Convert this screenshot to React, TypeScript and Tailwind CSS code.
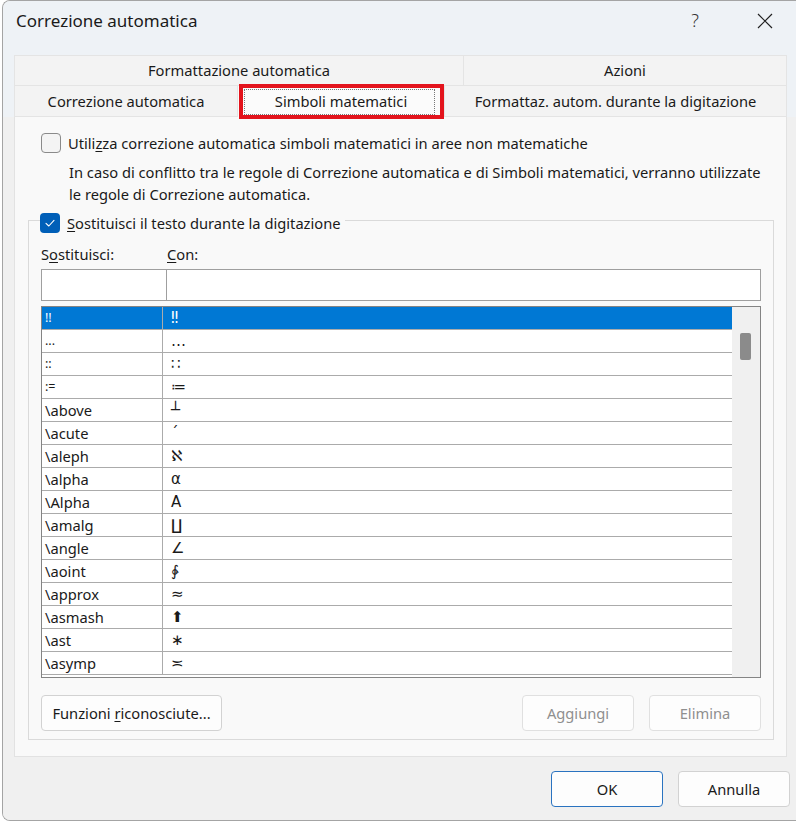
import React from 'react';

type Entry = { key: string; symbol: string; small?: boolean };

const entries: Entry[] = [
  { key: '!!', symbol: '‼', small: true },
  { key: '...', symbol: '…', small: true },
  { key: '::', symbol: '∷', small: true },
  { key: ':=', symbol: '≔', small: true },
  { key: '\\above', symbol: '┴' },
  { key: '\\acute', symbol: '´' },
  { key: '\\aleph', symbol: 'ℵ' },
  { key: '\\alpha', symbol: 'α' },
  { key: '\\Alpha', symbol: 'Α' },
  { key: '\\amalg', symbol: '∐' },
  { key: '\\angle', symbol: '∠' },
  { key: '\\aoint', symbol: '∳' },
  { key: '\\approx', symbol: '≈' },
  { key: '\\asmash', symbol: '⬆' },
  { key: '\\ast', symbol: '∗' },
  { key: '\\asymp', symbol: '≍' },
];

const Checkbox = ({ checked }: { checked?: boolean }) =>
  checked ? (
    <span className="flex h-[20px] w-[20px] shrink-0 items-center justify-center rounded-[4px] bg-[#005fb8]">
      <svg width="12" height="12" viewBox="0 0 12 12" fill="none">
        <path d="M2 6.3 L4.8 9 L10 3.4" stroke="#fff" strokeWidth="1.1" strokeLinecap="round" strokeLinejoin="round" />
      </svg>
    </span>
  ) : (
    <span className="h-[20px] w-[20px] shrink-0 rounded-[4px] border border-[#8a8a8a] bg-[#f4f4f4]" />
  );

const Button = ({
  children,
  width,
  disabled,
  primary,
}: {
  children: React.ReactNode;
  width: string;
  disabled?: boolean;
  primary?: boolean;
}) => (
  <button
    className={`flex h-[36px] items-center justify-center rounded-[4px] border bg-[#fdfdfd] text-[14.7px] ${width} ${
      disabled ? 'border-[#e0e0e0] text-[#8f8f8f]' : primary ? 'border-[#2a73c0]' : 'border-[#d2d2d2]'
    }`}
  >
    <span>{children}</span>
  </button>
);

const App = () => {
  return (
    <div className="h-[822px] w-[796px] overflow-hidden bg-white font-['Noto_Sans',sans-serif] text-[14.7px] text-[#1a1a1a]">
      <div className="ml-[2px] flex h-[821px] w-[794px] flex-col overflow-hidden rounded-tl-[8px] rounded-bl-[8px] border-t border-b border-l border-[#a4a4a4] bg-[#f0f0f0]">
        {/* Title bar */}
        <div className="flex h-[39px] shrink-0 items-center justify-between bg-[#eef2f6] pl-[13px] pr-[23px]">
          <span className="text-[17px]">Correzione automatica</span>
          <div className="flex items-center gap-[58px]">
            <span className="text-[18px] font-light text-[#333]">?</span>
            <svg width="16" height="16" viewBox="0 0 16 16">
              <path d="M1 1 L15 15 M15 1 L1 15" stroke="#222" strokeWidth="1.2" />
            </svg>
          </div>
        </div>

        {/* Client area */}
        <div className="flex flex-1 flex-col bg-[#f0f0f0]">
          <div className="bg-[#eef2f6] pt-[15px] pl-[11px] pr-[9px]">
            {/* Tab rows */}
            <div className="flex h-[31px]">
              <div className="flex w-[450px] items-center justify-center border border-[#e4e4e4] bg-[#f3f3f3]">
                Formattazione automatica
              </div>
              <div className="flex flex-1 items-center justify-center border border-l-0 border-[#e4e4e4] bg-[#f3f3f3]">
                Azioni
              </div>
            </div>
            <div className="flex h-[31px]">
              <div className="flex w-[224px] items-center justify-center border border-t-0 border-[#e4e4e4] bg-[#f3f3f3]">
                Correzione automatica
              </div>
              <div className="relative flex w-[206px] items-center justify-center bg-[#fbfbfb]">
                <span className="absolute top-[3px] right-[9px] bottom-[2px] left-[6px] border border-dotted border-[#777]" />
                <span className="relative">Simboli matematici</span>
                <span className="absolute top-[-2px] left-[1px] h-[35px] w-[205px] border-4 border-[#e3131c]" />
              </div>
              <div className="flex flex-1 items-center justify-center border border-t-0 border-[#e4e4e4] bg-[#f3f3f3]">
                Formattaz. autom. durante la digitazione
              </div>
            </div>
          </div>

          {/* Tab page */}
          <div className="bg-[#f0f0f0] pl-[11px] pr-[9px]">
            <div className="h-[640px] border border-t-0 border-[#e2e2e2] bg-[#f9f9f9] pt-[16px]">
              <div className="pl-[26px]">
                <div className="flex h-[20px] items-center gap-[7px]">
                  <Checkbox />
                  <span className="whitespace-nowrap">
                    Utili<span className="underline underline-offset-2">z</span>za correzione automatica simboli matematici in aree non matematiche
                  </span>
                </div>
                <p className="mt-[8px] ml-[28px] whitespace-nowrap leading-[22px]">
                  In caso di conflitto tra le regole di Correzione automatica e di Simboli matematici, verranno utilizzate
                  <br />
                  le regole di Correzione automatica.
                </p>
              </div>

              <fieldset className="mt-[3px] mr-[12px] ml-[13px] border border-[#dadada] px-[12px] pb-[8px]">
                <legend className="ml-[-1px] flex items-center gap-[7px] pt-[5px] pr-[4px]">
                  <Checkbox checked />
                  <span className="leading-[20px]">
                    <span className="underline underline-offset-2">S</span>ostituisci il testo durante la digitazione
                  </span>
                </legend>

                <div className="mt-[11px] flex h-[20px] items-center leading-[20px]">
                  <span className="w-[126px]">
                    S<span className="underline underline-offset-2">o</span>stituisci:
                  </span>
                  <span>
                    <span className="underline underline-offset-2">C</span>on:
                  </span>
                </div>

                <div className="mt-[5px] flex h-[32px]">
                  <div className="w-[126px] border border-[#9f9f9f] bg-white" />
                  <div className="flex-1 border border-l-0 border-[#9f9f9f] bg-white" />
                </div>

                {/* Replacement list */}
                <div className="mt-[5px] flex h-[372px] border border-[#848484] bg-white">
                  <div className="flex flex-1 flex-col">
                    {entries.map((e, i) => (
                      <div
                        key={e.key}
                        className={`flex h-[23px] shrink-0 border-b border-[#ababab] ${
                          i === 0 ? 'bg-[#0078d4] text-white' : ''
                        }`}
                      >
                        <div
                          className={`flex w-[121px] items-center border-r border-[#ababab] pl-[3px] ${
                            e.small ? 'text-[12.5px]' : ''
                          }`}
                        >
                          {e.key}
                        </div>
                        <div className="flex flex-1 items-center pl-[8px] font-['DejaVu_Sans',serif] text-[15px]">
                          {e.symbol}
                        </div>
                      </div>
                    ))}
                  </div>
                  <div className="w-[28px] bg-[#f0f0f0] pt-[26px] pl-[8px]">
                    <div className="h-[27px] w-[11px] rounded-[2px] bg-[#8b8b8b]" />
                  </div>
                </div>

                <div className="mt-[17px] flex items-center">
                  <Button width="w-[181px]">
                    Funzioni <span className="underline underline-offset-2">r</span>iconosciute...
                  </Button>
                  <div className="ml-auto flex gap-[15px]">
                    <Button width="w-[112px]" disabled>
                      Aggiungi
                    </Button>
                    <Button width="w-[112px]" disabled>
                      Elimina
                    </Button>
                  </div>
                </div>
              </fieldset>
            </div>
          </div>

          {/* Dialog buttons */}
          <div className="mt-[14px] flex justify-end gap-[15px] pr-[6px]">
            <Button width="w-[112px]" primary>
              OK
            </Button>
            <Button width="w-[112px]">Annulla</Button>
          </div>
        </div>
      </div>
    </div>
  );
};

export default App;
